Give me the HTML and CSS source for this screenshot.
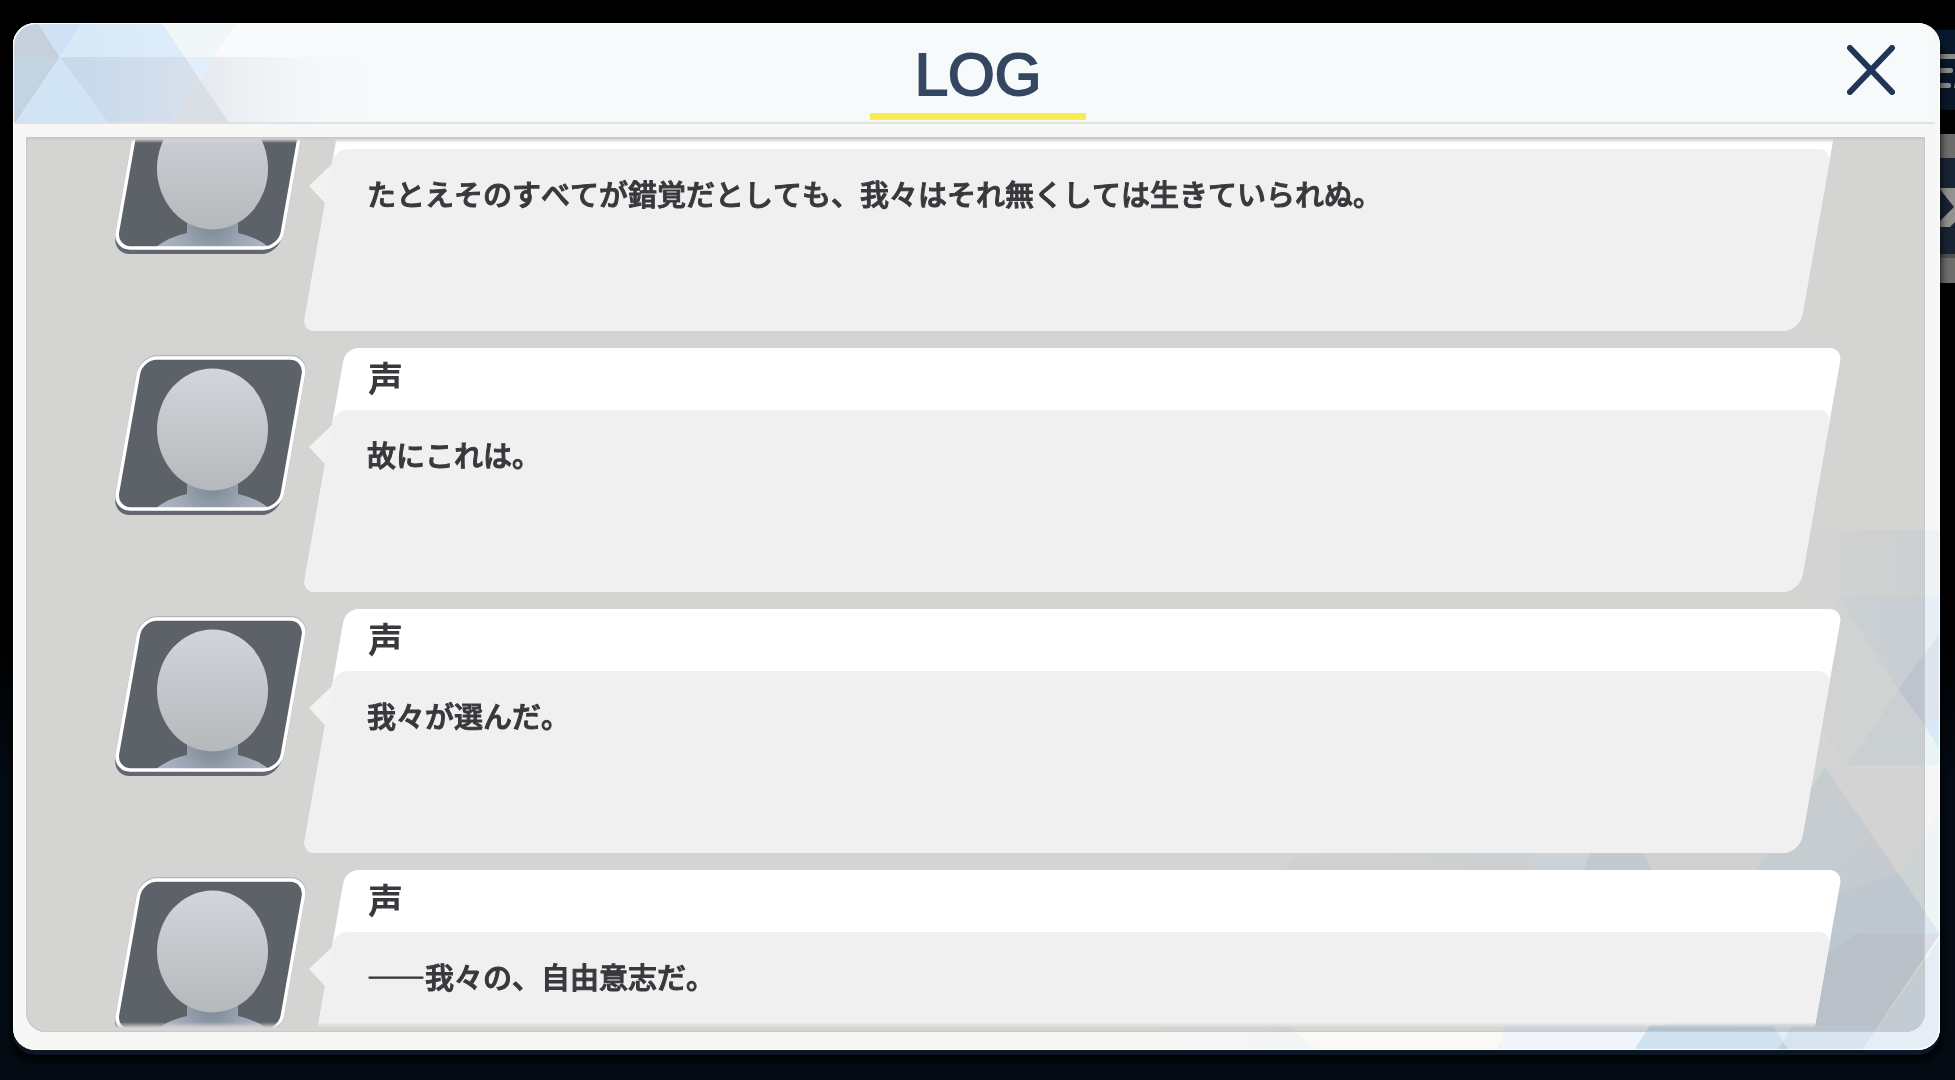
FILE: index.html
```html
<!DOCTYPE html>
<html lang="ja">
  <head>
    <meta charset="UTF-8" />
    <meta name="viewport" content="width=device-width, initial-scale=1.0" />
    <title>LOG</title>
    <link rel="stylesheet" href="styles.css">
  </head>
  <body>
    <!-- shared avatar silhouette -->
    <svg class="sprite" aria-hidden="true">
      <defs>
        <linearGradient id="face" x1="0" y1="0" x2="0" y2="1">
          <stop offset="0" stop-color="#d2d6dc" />
          <stop offset="0.5" stop-color="#c3c7cb" />
          <stop offset="1" stop-color="#b5b9bc" />
        </linearGradient>
        <radialGradient id="neck" gradientUnits="userSpaceOnUse" cx="100" cy="136" r="52">
          <stop offset="0.2" stop-color="#84909d" />
          <stop offset="0.6" stop-color="#9ba5b3" />
          <stop offset="1" stop-color="#adb4c1" />
        </radialGradient>
        <clipPath id="frame">
          <rect x="16" y="10" width="165" height="151" rx="16" transform="translate(15 0) skewX(-10)" />
        </clipPath>
      </defs>
      <symbol id="avatar" viewBox="0 0 196 172">
        <g transform="translate(15 0) skewX(-10)">
          <rect x="14" y="7" width="169" height="156" rx="18" fill="#8c919c" opacity="0.45" />
          <rect x="15" y="14" width="166" height="153" rx="17" fill="#636771" />
          <rect x="16" y="10" width="165" height="151" rx="16" fill="#5d6269" />
        </g>
        <g clip-path="url(#frame)">
          <path d="M75 130h51v16q20 4 36 18H39q16-14 36-18z" fill="url(#neck)" />
          <ellipse cx="100.5" cy="81.5" rx="55.5" ry="61" fill="url(#face)" />
        </g>
        <rect x="16" y="10" width="165" height="151" rx="16" fill="none" stroke="#fff" stroke-width="3.5" transform="translate(15 0) skewX(-10)" />
      </symbol>
    </svg>

    <!-- game buttons behind the dialog -->
    <svg class="backdrop" viewBox="0 0 30 300" width="30" height="300" aria-hidden="true">
      <rect y="30" width="30" height="80" fill="#08172a" />
      <g fill="#8b8b8a">
        <rect y="54" width="30" height="5" />
        <rect y="68" width="28" height="5" rx="2" />
        <rect y="83" width="26" height="5" rx="2" />
        <path d="M29 88l1-6v6z" />
      </g>
      <rect y="134" width="30" height="24" fill="#6d6d6b" />
      <rect y="158" width="30" height="96" fill="#182333" />
      <path d="M0 188h30v34l-5 5H0z" fill="#929291" />
      <path d="M14 188l15 19-14 14z" fill="#182333" />
      <rect y="254" width="30" height="29" fill="#6d6d6b" />
      <rect y="254" width="30" height="4" fill="#50504f" />
    </svg>

    <main class="dialog">
      <svg class="facets" viewBox="1140 530 800 520" width="800" height="520" aria-hidden="true">
        <defs>
          <linearGradient id="fadeBand" x1="0" x2="1">
            <stop offset="0" stop-color="#edf2f4" stop-opacity="0" />
            <stop offset="1" stop-color="#edf2f4" />
          </linearGradient>
          <linearGradient id="fadeSide" x1="0" x2="1">
            <stop offset="0" stop-color="#eef3f5" />
            <stop offset="1" stop-color="#e6eef7" />
          </linearGradient>
          <linearGradient id="fadeLow" x1="0" x2="1">
            <stop offset="0" stop-color="#eaf0f4" stop-opacity="0" />
            <stop offset="1" stop-color="#ebf1f5" />
          </linearGradient>
          <linearGradient id="bigFacet" x1="0" y1="0" x2="1" y2="1">
            <stop offset="0" stop-color="#e9f1f2" />
            <stop offset="1" stop-color="#e4eaf2" />
          </linearGradient>
        </defs>
        <rect x="1790" y="530" width="150" height="67" fill="url(#fadeBand)" />
        <path d="M1838 597h102v36l-42 56z" fill="url(#fadeSide)" />
        <path d="M1898 689l42-56v89h-18z" fill="#dde5ef" />
        <path d="M1922 722h18v28z" fill="#d7eafb" />
        <path d="M1838 597l60 92-51 76-32-45z" fill="#f3f6f5" />
        <path d="M1898 689l24 33h-45z" fill="#edf2f4" />
        <path d="M1877 722h45l18 28v15h-93z" fill="#ecf3f4" />
        <path d="M1825 767h115v168z" fill="#f5f6f5" />
        <path d="M1940 812v123l-42-62z" fill="#eff5f5" />
        <path d="M1300 850h340l-130 200h-370z" fill="url(#fadeLow)" />
        <path d="M1260 1000l56 50h180l30-50z" fill="#faf9f6" />
        <path d="M1530 850h112l50 84-58 116h-134z" fill="#eff5fa" />
        <path d="M1590 853h53l10 18h-70z" fill="#e5ebf2" />
        <path d="M1653 871l-11-21h130l-20 50z" fill="#f0f4f3" />
        <path d="M1825 767l73 106-76 112h-85l20-116z" fill="url(#bigFacet)" />
        <path d="M1898 873l42 61h-84z" fill="#dce8f2" />
        <path d="M1898 873l-42 61h-31l-60 0v-15z" fill="#e0e9f2" />
        <path d="M1780 934h76l-78 116h-144z" fill="#d9e8f3" />
        <path d="M1856 934h84l-78 116H1700z" fill="#d9e0e8" />
        <path d="M1634 1050l16-25h133v25z" fill="#d0e1ef" />
        <path d="M1783 1026h95l-16 24h-79z" fill="#d7e3ef" />
        <path d="M1940 938v112h-78z" fill="#e5eef6" />
        <path d="M1774 1026h18l-9 16z" fill="#e4eef7" />
        <path d="M1783 1042l6 8h-12z" fill="#c9d0da" />
      </svg>

      <header class="dialog-header">
        <svg class="header-facets" viewBox="14 23 380 99" width="380" height="99" aria-hidden="true">
          <defs>
            <linearGradient id="fadeTop" x1="0" x2="1">
              <stop offset="0" stop-color="#e6eaef" />
              <stop offset="0.6" stop-color="#f4f7f9" />
              <stop offset="1" stop-color="#f6fafb" />
            </linearGradient>
            <linearGradient id="blueLow" x1="0" x2="1">
              <stop offset="0" stop-color="#c6d8eb" />
              <stop offset="1" stop-color="#d7e1eb" />
            </linearGradient>
            <linearGradient id="blueTop" x1="0" x2="1">
              <stop offset="0" stop-color="#d5e9f7" />
              <stop offset="1" stop-color="#deecfb" />
            </linearGradient>
          </defs>
          <path d="M14 23h25l22 34H14z" fill="#c5d0dc" />
          <path d="M39 23h44L61 57z" fill="#cfe1f4" />
          <path d="M83 23h80l23 34H61z" fill="url(#blueTop)" />
          <path d="M163 23h75l-24 34h-28z" fill="#f1f6f9" />
          <path d="M238 23h90l-22 34h-92z" fill="#f8fafb" />
          <path d="M186 57h28l-13 23z" fill="#e1eefb" />
          <path d="M14 57h47l-44 65h-3z" fill="#c4d3e2" />
          <path d="M61 57l47 65H17z" fill="#d1e4f5" />
          <path d="M61 57h125l15 23-28 42h-65z" fill="url(#blueLow)" />
          <path d="M214 57h151v65H230l-29-42z" fill="url(#fadeTop)" />
          <path d="M201 80l29 42h-57z" fill="#dadfe6" />
        </svg>
        <h1 class="dialog-title">LOG</h1>
        <button type="button" class="btn-close" aria-label="閉じる">
          <svg viewBox="0 0 48 50" width="48" height="50" aria-hidden="true">
            <path d="M3 3l42 44M45 3L3 47" stroke="#213557" stroke-width="6" stroke-linecap="round" />
          </svg>
        </button>
      </header>

      <section class="log-panel">
        <div class="log-view">
          <ul class="log-list">
            <li class="log-item">
              <svg class="avatar" aria-hidden="true"><use href="#avatar" /></svg>
              <div class="bubble no-speaker">
                <span class="tail"></span>
                <p class="message">たとえそのすべてが錯覚だとしても、我々はそれ無くしては生きていられぬ。</p>
              </div>
            </li>
            <li class="log-item">
              <svg class="avatar" aria-hidden="true"><use href="#avatar" /></svg>
              <div class="bubble">
                <span class="tail"></span>
                <h2 class="speaker">声</h2>
                <p class="message">故にこれは。</p>
              </div>
            </li>
            <li class="log-item">
              <svg class="avatar" aria-hidden="true"><use href="#avatar" /></svg>
              <div class="bubble">
                <span class="tail"></span>
                <h2 class="speaker">声</h2>
                <p class="message">我々が選んだ。</p>
              </div>
            </li>
            <li class="log-item">
              <svg class="avatar" aria-hidden="true"><use href="#avatar" /></svg>
              <div class="bubble">
                <span class="tail"></span>
                <h2 class="speaker">声</h2>
                <p class="message">――我々の、自由意志だ。</p>
              </div>
            </li>
          </ul>
        </div>
      </section>
    </main>
  </body>
</html>
```

FILE: styles.css
```css
/* Global styles */
* {
  box-sizing: border-box;
  margin: 0;
  padding: 0;
}

body {
  display: flex;
  height: 100vh;
  padding: 23px 15px 30px 13px;
  overflow: hidden;
  background: linear-gradient(#000 58%, #040b13 72%, #040b13);
  font-family: "Noto Sans CJK JP", sans-serif;
  color: #38393d;
}

.sprite {
  position: absolute;
  width: 0;
  height: 0;
}

.backdrop {
  position: absolute;
  top: 0;
  right: 0;
}

/* Dialog */
.dialog {
  position: relative;
  display: flex;
  flex-direction: column;
  flex: 1;
  min-width: 0;
  padding-bottom: 18px;
  border-radius: 22px;
  background: #f7f7f5;
  box-shadow: 0 5px 0 #0b1725, 0 10px 8px #000;
}

.dialog::after {
  content: "";
  position: absolute;
  inset: 0;
  border-radius: 22px;
  box-shadow: inset -1px -1px 1px #fff, inset 1px 1px 1px #fff;
  pointer-events: none;
}

.facets {
  position: absolute;
  right: 0;
  bottom: 0;
  border-bottom-right-radius: 22px;
}

.dialog-header {
  position: relative;
  display: grid;
  grid-template-columns: 1fr auto 1fr;
  height: 101px;
  margin-right: 5px;
  border-bottom: 2px solid #dfe1e4;
  border-radius: 22px 18px 0 0;
  background: #f6fafb;
  overflow: hidden;
}

.header-facets {
  position: absolute;
  top: 0;
  left: 0;
}

.dialog-title {
  grid-column: 2;
  width: 216px;
  height: 97px;
  margin-left: 8px;
  border-bottom: 7px solid #fbec55;
  font-family: "Liberation Sans", sans-serif;
  font-size: 60px;
  font-weight: 400;
  line-height: 104px;
  text-align: center;
  color: #344662;
  -webkit-text-stroke: 2px #344662;
}

.btn-close {
  justify-self: end;
  align-self: start;
  margin: 22px 40px 0 0;
  border: none;
  background: none;
  line-height: 0;
  cursor: pointer;
}

/* Log list */
.log-panel {
  position: relative;
  flex: 1;
  min-height: 0;
  margin: 13px 15px 0 13px;
  padding: 2px 0 4px;
  border-radius: 0 0 20px 20px;
  background: rgba(0, 0, 0, 0.14);
  box-shadow: inset 0 2px 2px #c6c8cb, inset 0 -1px 1px #c6c8cb, inset 1px 0 1px #c6c8cb, inset -1px 0 1px #c6c8cb;
}

.log-view {
  height: 100%;
  overflow: hidden;
  -webkit-mask-image: linear-gradient(transparent, #000 4px, #000 calc(100% - 6px), transparent);
  mask-image: linear-gradient(transparent, #000 4px, #000 calc(100% - 6px), transparent);
}

.log-list {
  display: flex;
  flex-direction: column;
  gap: 17px;
  margin-top: -52px;
  list-style: none;
}

.log-item {
  display: flex;
  gap: 16px;
  padding: 0 104px 0 86px;
}

.avatar {
  flex: none;
  width: 196px;
  height: 172px;
}

.bubble {
  position: relative;
  flex: 1;
  height: 244px;
  padding: 0 43px;
}

.bubble::before,
.bubble::after {
  content: "";
  position: absolute;
  inset: 0;
  z-index: -1;
  border-radius: 13px 13px 17px 12px;
  background: #fff;
  transform: skewX(-10deg);
}

/* the grey body shares the skew axis of the white card */
.bubble::after {
  top: 62px;
  background: #f0f0f0;
  transform-origin: 50% 60px;
}

.no-speaker {
  padding-top: 62px;
}

.tail {
  position: absolute;
  top: 76px;
  left: -15px;
  width: 24px;
  height: 40px;
  background: #f2f2f1;
  clip-path: polygon(0 23px, 100% 0, 16px 100%);
}

.speaker {
  height: 62px;
  padding-left: 1px;
  font-size: 35px;
  font-weight: 700;
  line-height: 58px;
}

.message {
  padding-top: 23px;
  font-size: 29px;
  font-weight: 500;
  line-height: 43px;
  font-kerning: none;
  -webkit-text-stroke: 1px #38393d;
}
```
